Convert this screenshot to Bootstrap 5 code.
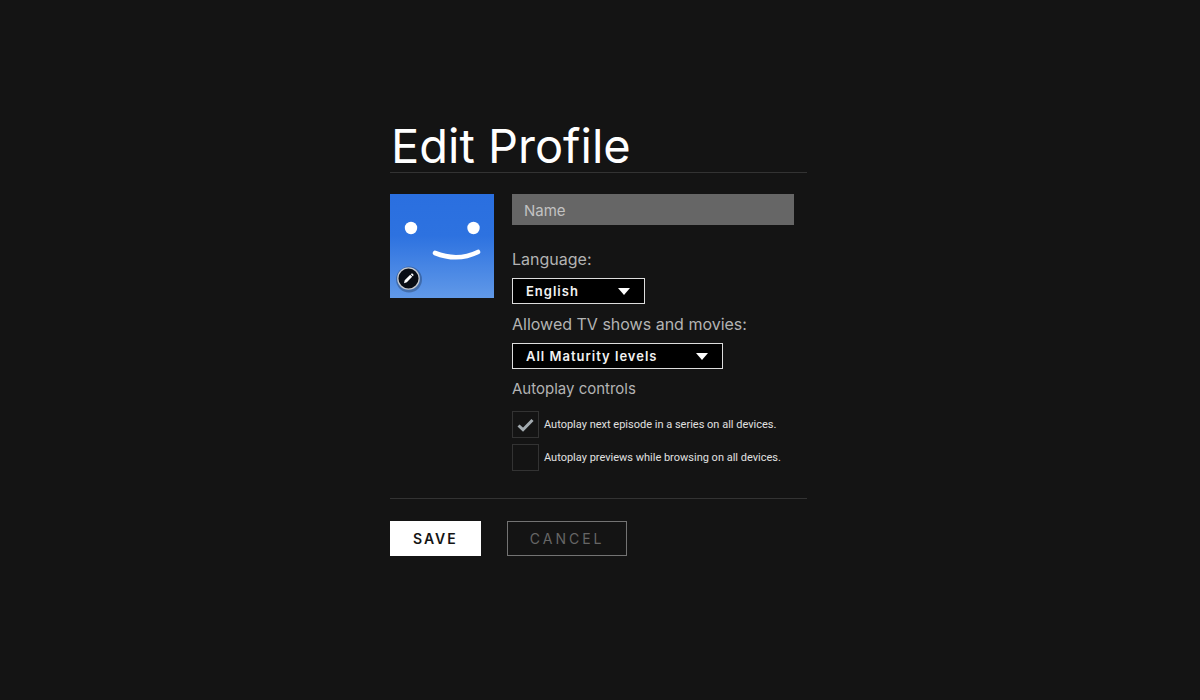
<!DOCTYPE html>
<html lang="en">
<head>
<meta charset="utf-8">
<meta name="viewport" content="width=device-width, initial-scale=1">
<title>Edit Profile</title>
<link href="https://cdn.jsdelivr.net/npm/bootstrap@5.3.0/dist/css/bootstrap.min.css" rel="stylesheet">
<script src="https://cdn.jsdelivr.net/npm/bootstrap@5.3.0/dist/js/bootstrap.bundle.min.js" defer></script>
<style>
  body { background: #141414; color: #b3b3b3; font-family: Inter, "Liberation Sans", sans-serif; font-size: 16px; line-height: 24px; }
  .profile-page { max-width: 420px; padding: 120px 3px 24px 0; }
  .profile-title { font-size: 47px; line-height: 52px; font-weight: 400; color: #fff; padding-left: 1px; }
  .profile-rule { border-color: #333 !important; }
  .profile-main { gap: 18px; padding: 21px 0 27px; }
  .avatar { width: 104px; height: 104px; }
  .avatar-face { background: linear-gradient(#2a6fe0, #2d72e0 40%, #6199e8); }
  .avatar-edit { left: 5px; bottom: 6px; }
  .name-input, .name-input:focus { height: 31px; background: #666; color: #fff; font-size: 15px; padding: 2px 12px 0; max-width: 282px; }
  .name-input::placeholder { color: #c2c2c2; opacity: 1; }
  .group-label { display: block; font-size: 16px; line-height: 24px; font-weight: 400; color: #b3b3b3; }
  .controls-label { font-size: 15px; }
  .language-group { margin-top: 22px; }
  .black-select { appearance: none; display: block; height: 26px; padding: 0 36px 0 13px; border: 1px solid #ddd; border-radius: 0; color: #f2f2f2; font-size: 13px; font-weight: 600; letter-spacing: 1px; margin: 7px 0 8px;
    background: #000 url("data:image/svg+xml,%3Csvg xmlns='http://www.w3.org/2000/svg' width='12' height='7'%3E%3Cpath d='M0 0h12L6 7z' fill='%23fff'/%3E%3C/svg%3E") no-repeat right 14px center; }
  .select-language { width: 133px; }
  .select-maturity { width: 211px; }
  .autoplay-list { display: grid; gap: 6px; margin-top: 10px; }
  .autoplay-item { gap: 5px; font-family: Roboto, "Liberation Sans", sans-serif; font-size: 11px; line-height: 16px; color: #e0e0e0; }
  .autoplay-box { appearance: none; flex: none; width: 27px; height: 27px; margin: 0; border: 1px solid #333; background: #141414 center no-repeat; }
  .autoplay-box:checked { background-image: url("data:image/svg+xml,%3Csvg xmlns='http://www.w3.org/2000/svg' width='17' height='14'%3E%3Cpath d='M1.5 7.5L6 11.7L15.5 2' fill='none' stroke='%23a3abb0' stroke-width='3'/%3E%3C/svg%3E"); }
  .profile-actions { gap: 26px; padding-top: 22px; }
  .action-btn, .action-btn:hover { height: 35px; padding: 0 22px; border-radius: 0; font-size: 14px; line-height: 20px; letter-spacing: 2px; }
  .save-btn, .save-btn:hover { background: #fff; border-color: #fff; color: #141414; font-weight: 600; }
  .cancel-btn, .cancel-btn:hover { background: transparent; border-color: #737373; color: #666; font-weight: 400; letter-spacing: 3px; }
</style>
</head>
<body>
<main class="profile-page mx-auto">
  <h1 class="profile-title border-bottom profile-rule mb-0 pb-0">Edit Profile</h1>
  <form>
    <div class="profile-main d-flex align-items-start border-bottom profile-rule">
      <div class="avatar avatar-face position-relative flex-shrink-0">
        <svg class="d-block" width="104" height="104" viewBox="0 0 104 104" aria-hidden="true">
          <circle cx="21" cy="34" r="6.2" fill="#fff"/>
          <circle cx="83.5" cy="34" r="6.2" fill="#fff"/>
          <path d="M45 59Q67.5 68 88 58" fill="none" stroke="#fff" stroke-width="4.6" stroke-linecap="round"/>
        </svg>
        <button type="button" class="avatar-edit position-absolute p-0 border-0 bg-transparent" aria-label="Edit picture">
          <svg class="d-block overflow-visible" width="26" height="26" viewBox="0 0 26 26">
            <circle cx="14" cy="13.5" r="13" fill="#000" opacity=".25"/>
            <circle cx="13.5" cy="12.5" r="10.7" fill="#090d14" stroke="#c4c8ce" stroke-width="1.3"/>
            <path d="M9 17.2L9.7 14.3L15.2 8.8L17.2 10.8L11.8 16.3ZM15.8 8.2L16.5 7.6Q17 7.3 17.4 7.6L18.4 8.6Q18.7 9 18.4 9.4L17.8 10.2Z" fill="#fff"/>
          </svg>
        </button>
      </div>
      <div class="flex-grow-1">
        <input class="name-input form-control border-0 rounded-0" type="text" placeholder="Name" aria-label="Name">
        <div class="language-group">
          <label class="group-label" for="language">Language:</label>
          <select class="black-select select-language" id="language"><option>English</option></select>
        </div>
        <label class="group-label" for="maturity">Allowed TV shows and movies:</label>
        <select class="black-select select-maturity" id="maturity"><option>All Maturity levels</option></select>
        <fieldset>
          <legend class="group-label controls-label float-none mb-0">Autoplay controls</legend>
          <div class="autoplay-list">
            <label class="autoplay-item d-flex align-items-center"><input class="autoplay-box" type="checkbox" checked>Autoplay next episode in a series on all devices.</label>
            <label class="autoplay-item d-flex align-items-center"><input class="autoplay-box" type="checkbox">Autoplay previews while browsing on all devices.</label>
          </div>
        </fieldset>
      </div>
    </div>
    <div class="profile-actions d-flex">
      <button type="submit" class="btn action-btn save-btn">SAVE</button>
      <button type="button" class="btn action-btn cancel-btn">CANCEL</button>
    </div>
  </form>
</main>
</body>
</html>
